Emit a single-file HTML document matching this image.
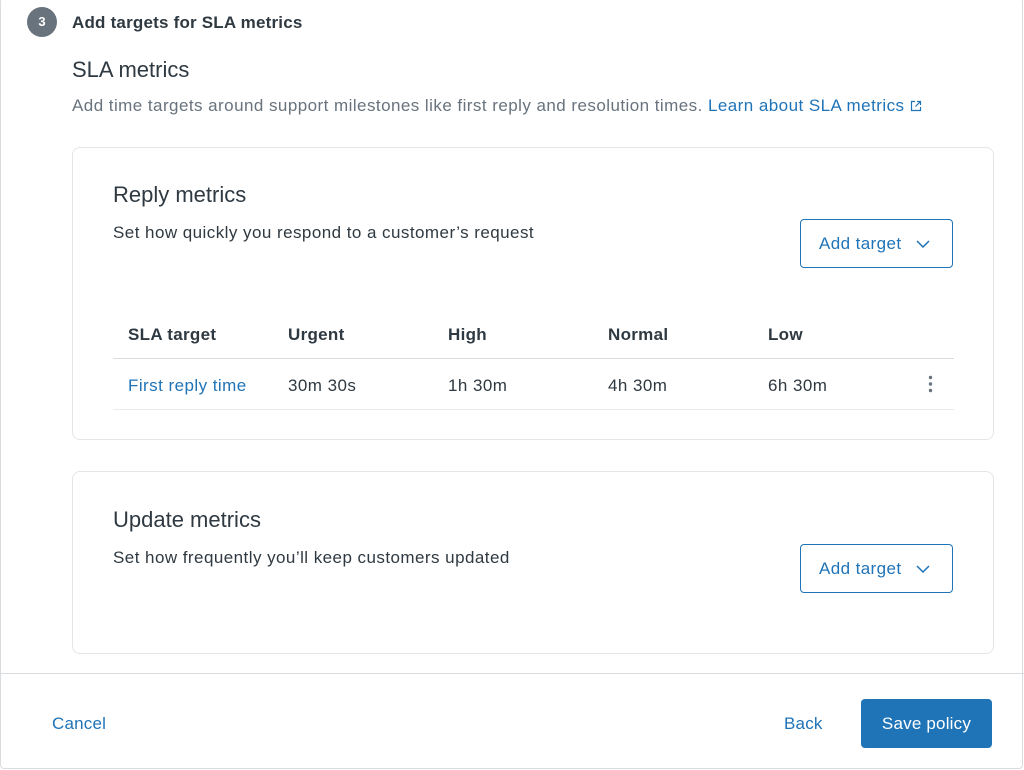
<!DOCTYPE html>
<html><head><style>
*{box-sizing:border-box;margin:0;padding:0}
body{width:1024px;height:770px;background:#fff;font-family:"Liberation Sans",sans-serif;color:#2f3941;position:relative;overflow:hidden}
.frame{position:absolute;left:0;top:-2px;width:1023px;height:771px;border:1px solid #d8dcde;border-radius:4px}
.abs{position:absolute;white-space:nowrap}
.step{left:27px;top:7px;width:30px;height:30px;border-radius:50%;background:#68737d;color:#fff;font-size:13px;font-weight:bold;text-align:center;line-height:30px}
.card{position:absolute;left:72px;width:922px;border:1px solid #e3e6e8;border-radius:8px}
.btn{position:absolute;left:800px;width:153px;height:49px;border:1px solid #1f73b7;border-radius:4px;color:#1f73b7;font-size:17px;letter-spacing:0.4px;line-height:47px;padding-left:18px}
.btn svg{position:absolute;right:22px;top:20px}
.t{font-size:17px;letter-spacing:0.45px}
.th{top:325px;font-size:17px;font-weight:bold;letter-spacing:0.3px}
.td{top:376px}
.line{position:absolute;left:113px;width:841px;height:1px;background:#d8dcde}
</style></head><body>
<div class="frame"></div>
<div class="abs step">3</div>
<div class="abs" style="left:72px;top:13px;font-size:17px;font-weight:bold;letter-spacing:0.2px">Add targets for SLA metrics</div>
<div class="abs" style="left:72px;top:57px;font-size:22px">SLA metrics</div>
<div class="abs t" style="left:72px;top:96px;color:#68737d">Add time targets around support milestones like first reply and resolution times. <span style="color:#1f73b7">Learn about SLA metrics</span> <svg width="12" height="12" viewBox="0 0 12 12" style="vertical-align:-1px"><path d="M5 1.5H1.5v9h9V7M7 1.5h3.5V5M10.5 1.5L5.5 6.5" fill="none" stroke="#1f73b7" stroke-width="1.2"/></svg></div>

<div class="card" style="top:147px;height:293px"></div>
<div class="abs" style="left:113px;top:182px;font-size:22px">Reply metrics</div>
<div class="abs t" style="left:113px;top:223px">Set how quickly you respond to a customer’s request</div>
<div class="btn" style="top:219px">Add target<svg width="14" height="8" viewBox="0 0 14 8"><path d="M1 1l6 6 6-6" fill="none" stroke="#1f73b7" stroke-width="1.5"/></svg></div>
<div class="abs th" style="left:128px">SLA target</div>
<div class="abs th" style="left:288px">Urgent</div>
<div class="abs th" style="left:448px">High</div>
<div class="abs th" style="left:608px">Normal</div>
<div class="abs th" style="left:768px">Low</div>
<div class="line" style="top:358px"></div>
<div class="abs t td" style="left:128px;color:#1f73b7">First reply time</div>
<div class="abs t td" style="left:288px">30m 30s</div>
<div class="abs t td" style="left:448px">1h 30m</div>
<div class="abs t td" style="left:608px">4h 30m</div>
<div class="abs t td" style="left:768px">6h 30m</div>
<svg class="abs" style="left:928px;top:375px" width="5" height="18" viewBox="0 0 5 18"><circle cx="2.5" cy="2.5" r="1.7" fill="#68737d"/><circle cx="2.5" cy="9" r="1.7" fill="#68737d"/><circle cx="2.5" cy="15.5" r="1.7" fill="#68737d"/></svg>
<div class="line" style="top:409px;background:#e9ebed"></div>

<div class="card" style="top:471px;height:183px"></div>
<div class="abs" style="left:113px;top:507px;font-size:22px">Update metrics</div>
<div class="abs t" style="left:113px;top:548px">Set how frequently you’ll keep customers updated</div>
<div class="btn" style="top:544px">Add target<svg width="14" height="8" viewBox="0 0 14 8"><path d="M1 1l6 6 6-6" fill="none" stroke="#1f73b7" stroke-width="1.5"/></svg></div>

<div style="position:absolute;left:0;top:673px;width:1024px;height:1px;background:#d8dcde"></div>
<div class="abs" style="left:52px;top:714px;font-size:17px;color:#1f73b7;letter-spacing:0.2px">Cancel</div>
<div class="abs" style="left:784px;top:714px;font-size:17px;color:#1f73b7;letter-spacing:0.2px">Back</div>
<div class="abs" style="left:861px;top:699px;width:131px;height:49px;background:#1f73b7;border-radius:4px;color:#fff;font-size:17px;letter-spacing:0.2px;line-height:49px;text-align:center">Save policy</div>
</body></html>
